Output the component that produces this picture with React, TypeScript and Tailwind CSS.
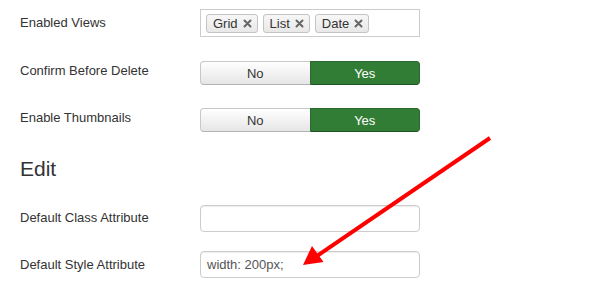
import React from "react";

const font = { fontFamily: '"Liberation Sans", Arial, sans-serif' };

function Tag({ label }: { label: string }) {
  return (
    <span className="flex h-[19px] items-center gap-[5px] rounded-[3px] border border-[#c4c4c4] bg-gradient-to-b from-[#f7f7f7] to-[#e8e8e8] pl-[6px] pr-[5px] text-[13px] leading-none text-[#333]">
      {label}
      <svg width="9" height="9" viewBox="0 0 9 9">
        <path d="M1.5 1.5 L7.5 7.5 M7.5 1.5 L1.5 7.5" stroke="#666" strokeWidth="2" strokeLinecap="round" />
      </svg>
    </span>
  );
}

function Toggle() {
  return (
    <div className="flex h-[24px] w-[220px] text-[13px] leading-none">
      <div className="flex flex-1 items-center justify-center rounded-l-[4px] border border-r-0 border-[#c8c8c8] border-b-[#b3b3b3] bg-gradient-to-b from-white to-[#e6e6e6] pt-[1px] text-[#333]">
        No
      </div>
      <div className="flex flex-1 items-center justify-center rounded-r-[4px] border border-[#2a6a2d] border-b-[#1f5222] bg-[#327d36] pt-[1px] text-white">
        Yes
      </div>
    </div>
  );
}

export default function App() {
  return (
    <div className="relative h-[300px] w-[600px] overflow-hidden bg-white pl-[20px] pt-[9px]" style={font}>
      <div className="flex flex-col">
        <div className="flex h-[28px]">
          <div className="w-[180px] pt-[5px] text-[13px] leading-[18px] text-[#333]">Enabled Views</div>
          <div className="flex h-[28px] w-[220px] items-center gap-[5px] border border-[#ccc] pl-[5px]">
            <Tag label="Grid" />
            <Tag label="List" />
            <Tag label="Date" />
          </div>
        </div>
        <div className="mt-[24px] flex h-[24px]">
          <div className="w-[180px] pt-[1px] text-[13px] leading-[18px] text-[#333]">Confirm Before Delete</div>
          <Toggle />
        </div>
        <div className="mt-[23px] flex h-[24px]">
          <div className="w-[180px] pt-[1px] text-[13px] leading-[18px] text-[#333]">Enable Thumbnails</div>
          <Toggle />
        </div>
        <h2 className="mt-[26px] text-[21px] font-normal leading-[21px] text-[#333]">Edit</h2>
        <div className="mt-[26px] flex h-[27px]">
          <div className="w-[180px] pt-[4px] text-[13px] leading-[18px] text-[#333]">Default Class Attribute</div>
          <div className="h-[27px] w-[220px] rounded-[4px] border border-[#ccc] shadow-[inset_0_1px_1px_rgba(0,0,0,0.075)]" />
        </div>
        <div className="mt-[19px] flex h-[27px]">
          <div className="w-[180px] pt-[5px] text-[13px] leading-[18px] text-[#333]">Default Style Attribute</div>
          <div className="flex h-[27px] w-[220px] items-center rounded-[4px] border border-[#ccc] pl-[6px] text-[13px] text-[#555] shadow-[inset_0_1px_1px_rgba(0,0,0,0.075)]">
            width: 200px;
          </div>
        </div>
      </div>
      <svg className="pointer-events-none absolute left-0 top-0" width="600" height="300" viewBox="0 0 600 300">
        <line x1="490" y1="138" x2="314" y2="258" stroke="#ff0000" strokeWidth="4" />
        <polygon points="303,265 323.5,262 312,246" fill="#ff0000" />
      </svg>
    </div>
  );
}
